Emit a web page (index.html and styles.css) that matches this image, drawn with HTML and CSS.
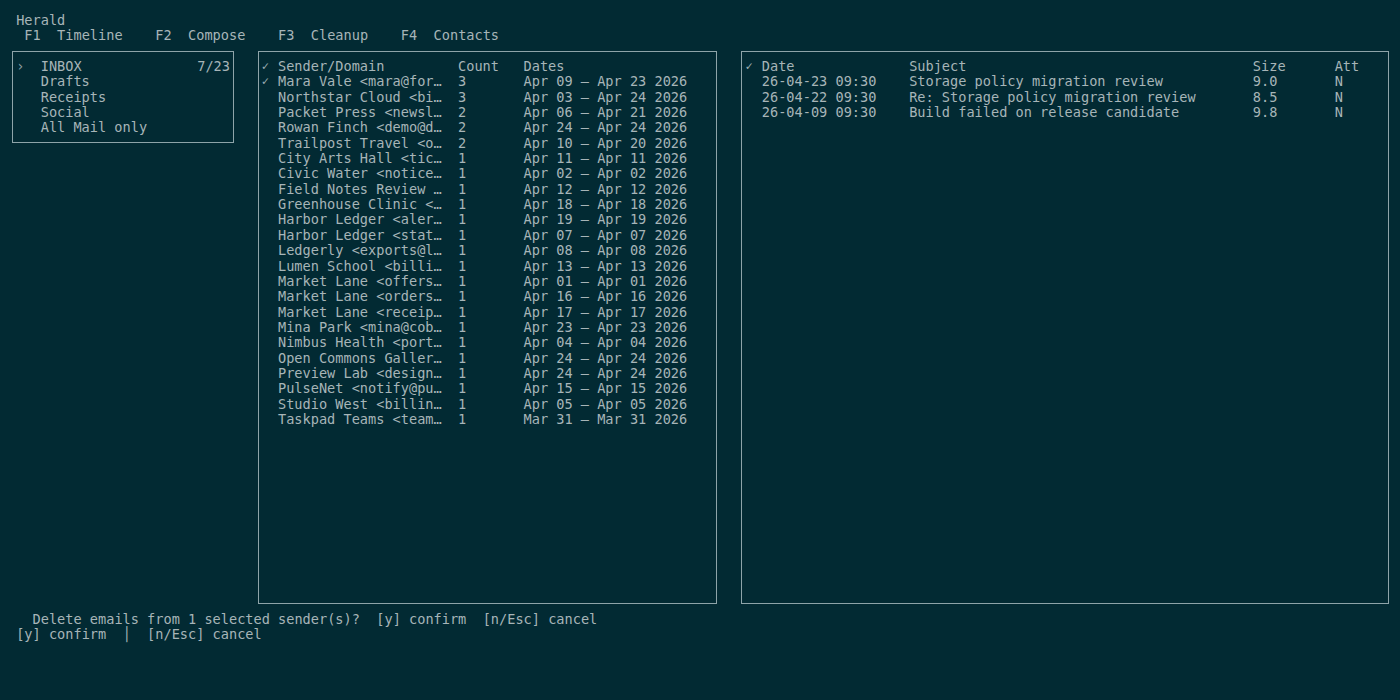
FILE: index.html
```html
<!DOCTYPE html>
<html lang="en">
<head>
    <meta charset="UTF-8">
    <meta name="viewport" content="width=device-width, initial-scale=1.0">
    <title>Herald</title>
    <link rel="stylesheet" href="styles.css">
</head>
<body>

    <div class="screen">
        <div class="title">Herald</div>

        <!-- Tabs -->
        <div class="tabs">
            <span class="tab"><span class="key">F1</span>Timeline</span>
            <span class="tab"><span class="key">F2</span>Compose</span>
            <span class="tab"><span class="key">F3</span>Cleanup</span>
            <span class="tab"><span class="key">F4</span>Contacts</span>
        </div>

        <div class="panels">
            <!-- Folders -->
            <div class="panel folders">
                <div class="folder active"><span class="marker">›</span><span>INBOX</span><span>7/23</span></div>
                <div class="folder"><span class="marker"></span><span>Drafts</span><span></span></div>
                <div class="folder"><span class="marker"></span><span>Receipts</span><span></span></div>
                <div class="folder"><span class="marker"></span><span>Social</span><span></span></div>
                <div class="folder"><span class="marker"></span><span>All Mail only</span><span></span></div>
            </div>

            <!-- Senders -->
            <div class="panel senders">
                <div class="row head"><span class="check">✓</span><span>Sender/Domain</span><span>Count</span><span>Dates</span></div>
                <div class="row"><span class="check">✓</span><span>Mara Vale &lt;mara@for…</span><span>3</span><span>Apr 09 – Apr 23 2026</span></div>
                <div class="row"><span class="check"></span><span>Northstar Cloud &lt;bi…</span><span>3</span><span>Apr 03 – Apr 24 2026</span></div>
                <div class="row"><span class="check"></span><span>Packet Press &lt;newsl…</span><span>2</span><span>Apr 06 – Apr 21 2026</span></div>
                <div class="row"><span class="check"></span><span>Rowan Finch &lt;demo@d…</span><span>2</span><span>Apr 24 – Apr 24 2026</span></div>
                <div class="row"><span class="check"></span><span>Trailpost Travel &lt;o…</span><span>2</span><span>Apr 10 – Apr 20 2026</span></div>
                <div class="row"><span class="check"></span><span>City Arts Hall &lt;tic…</span><span>1</span><span>Apr 11 – Apr 11 2026</span></div>
                <div class="row"><span class="check"></span><span>Civic Water &lt;notice…</span><span>1</span><span>Apr 02 – Apr 02 2026</span></div>
                <div class="row"><span class="check"></span><span>Field Notes Review …</span><span>1</span><span>Apr 12 – Apr 12 2026</span></div>
                <div class="row"><span class="check"></span><span>Greenhouse Clinic &lt;…</span><span>1</span><span>Apr 18 – Apr 18 2026</span></div>
                <div class="row"><span class="check"></span><span>Harbor Ledger &lt;aler…</span><span>1</span><span>Apr 19 – Apr 19 2026</span></div>
                <div class="row"><span class="check"></span><span>Harbor Ledger &lt;stat…</span><span>1</span><span>Apr 07 – Apr 07 2026</span></div>
                <div class="row"><span class="check"></span><span>Ledgerly &lt;exports@l…</span><span>1</span><span>Apr 08 – Apr 08 2026</span></div>
                <div class="row"><span class="check"></span><span>Lumen School &lt;billi…</span><span>1</span><span>Apr 13 – Apr 13 2026</span></div>
                <div class="row"><span class="check"></span><span>Market Lane &lt;offers…</span><span>1</span><span>Apr 01 – Apr 01 2026</span></div>
                <div class="row"><span class="check"></span><span>Market Lane &lt;orders…</span><span>1</span><span>Apr 16 – Apr 16 2026</span></div>
                <div class="row"><span class="check"></span><span>Market Lane &lt;receip…</span><span>1</span><span>Apr 17 – Apr 17 2026</span></div>
                <div class="row"><span class="check"></span><span>Mina Park &lt;mina@cob…</span><span>1</span><span>Apr 23 – Apr 23 2026</span></div>
                <div class="row"><span class="check"></span><span>Nimbus Health &lt;port…</span><span>1</span><span>Apr 04 – Apr 04 2026</span></div>
                <div class="row"><span class="check"></span><span>Open Commons Galler…</span><span>1</span><span>Apr 24 – Apr 24 2026</span></div>
                <div class="row"><span class="check"></span><span>Preview Lab &lt;design…</span><span>1</span><span>Apr 24 – Apr 24 2026</span></div>
                <div class="row"><span class="check"></span><span>PulseNet &lt;notify@pu…</span><span>1</span><span>Apr 15 – Apr 15 2026</span></div>
                <div class="row"><span class="check"></span><span>Studio West &lt;billin…</span><span>1</span><span>Apr 05 – Apr 05 2026</span></div>
                <div class="row"><span class="check"></span><span>Taskpad Teams &lt;team…</span><span>1</span><span>Mar 31 – Mar 31 2026</span></div>
            </div>

            <!-- Messages -->
            <div class="panel messages">
                <div class="row head"><span class="check">✓</span><span>Date</span><span>Subject</span><span>Size</span><span>Att</span></div>
                <div class="row"><span class="check"></span><span>26-04-23 09:30</span><span>Storage policy migration review</span><span>9.0</span><span>N</span></div>
                <div class="row"><span class="check"></span><span>26-04-22 09:30</span><span>Re: Storage policy migration review</span><span>8.5</span><span>N</span></div>
                <div class="row"><span class="check"></span><span>26-04-09 09:30</span><span>Build failed on release candidate</span><span>9.8</span><span>N</span></div>
            </div>
        </div>

        <div class="prompt">Delete emails from 1 selected sender(s)?  [y] confirm  [n/Esc] cancel</div>
        <div class="hints">[y] confirm  │  [n/Esc] cancel</div>
    </div>

</body>
</html>
```

FILE: styles.css
```css
:root {
    --lh: 15.35px;
    --bg: #022a33;
    --fg: #a7b5b8;
    --line: #8ea4a9;
}

html, body {
    margin: 0;
    background: var(--bg);
}

.screen {
    font-family: "DejaVu Sans Mono", "Liberation Mono", monospace;
    font-size: 13.6px;
    line-height: var(--lh);
    color: var(--fg);
    padding: 13px 0 0 8px;
    height: 687px;
}

.title {
    padding-left: 1ch;
}

.tabs {
    display: flex;
    gap: 4ch;
    padding-left: 2ch;
}

.key {
    margin-right: 2ch;
}

.panels {
    display: flex;
    align-items: flex-start;
    gap: 2ch;
}

/* box lines sit in the middle of their cell, like a terminal border */
.panel {
    box-sizing: border-box;
    margin: calc(var(--lh) / 2) calc(1ch / 2 - 1px) calc(var(--lh) / 2) calc(1ch / 2);
    padding: calc(var(--lh) / 2 - 1px) calc(1ch / 2 - 1px);
    border: 1px solid var(--line);
}

.folders {
    width: calc(27ch + 1px);
    height: calc(var(--lh) * 6);
}

.senders {
    width: calc(56ch + 1px);
    height: calc(var(--lh) * 36);
}

.messages {
    margin-left: calc(1ch / 2 + 1px);
    width: calc(79ch + 1px);
    height: calc(var(--lh) * 36);
}

.folder {
    display: grid;
    grid-template-columns: 3ch 1fr auto;
}

.marker {
    color: #8c9ea2;
}

.check {
    font-size: 12px;
    color: #9fb0b3;
}

.row span,
.folder span {
    white-space: pre;
}

.senders .row {
    display: grid;
    grid-template-columns: 2ch 22ch 8ch 1fr;
}

.messages .row {
    display: grid;
    grid-template-columns: 2ch 18ch 42ch 10ch 1fr;
}

.prompt,
.hints {
    white-space: pre;
}

.prompt {
    padding-left: 3ch;
}

.hints {
    padding-left: 1ch;
}
```
